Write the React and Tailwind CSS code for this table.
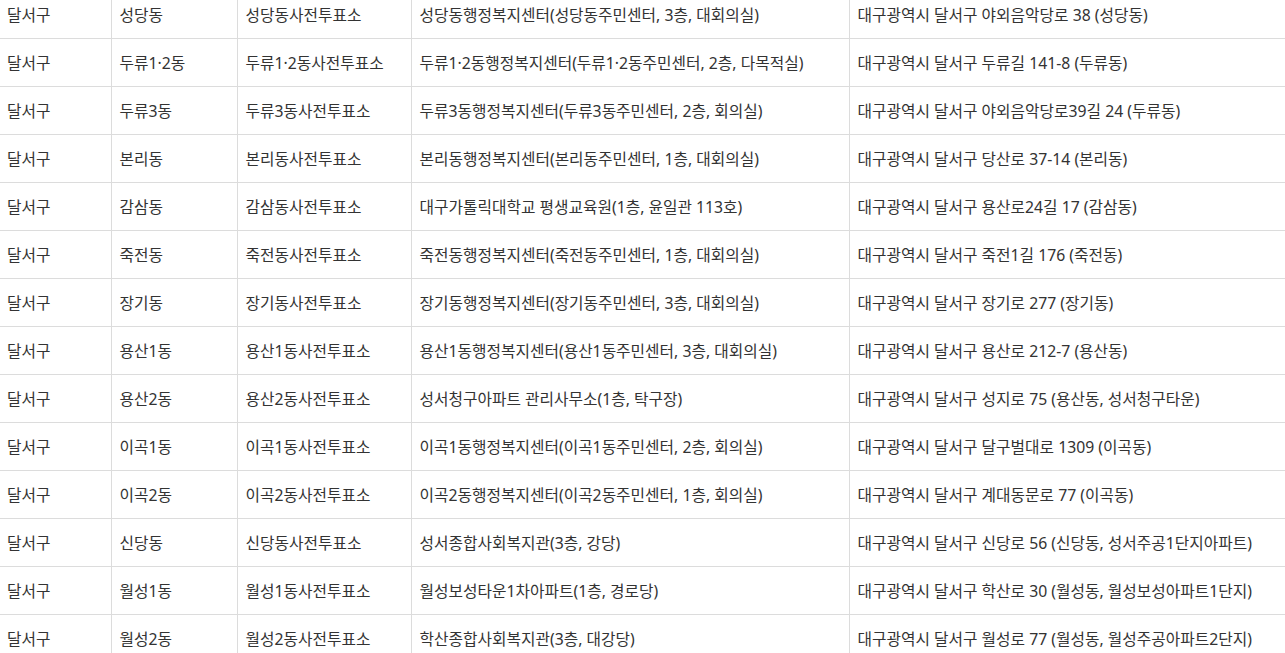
import React from "react";

const rows = [
    ["달서구", "성당동", "성당동사전투표소", "성당동행정복지센터(성당동주민센터, 3층, 대회의실)", "대구광역시 달서구 야외음악당로 38 (성당동)"],
    ["달서구", "두류1·2동", "두류1·2동사전투표소", "두류1·2동행정복지센터(두류1·2동주민센터, 2층, 다목적실)", "대구광역시 달서구 두류길 141-8 (두류동)"],
    ["달서구", "두류3동", "두류3동사전투표소", "두류3동행정복지센터(두류3동주민센터, 2층, 회의실)", "대구광역시 달서구 야외음악당로39길 24 (두류동)"],
    ["달서구", "본리동", "본리동사전투표소", "본리동행정복지센터(본리동주민센터, 1층, 대회의실)", "대구광역시 달서구 당산로 37-14 (본리동)"],
    ["달서구", "감삼동", "감삼동사전투표소", "대구가톨릭대학교 평생교육원(1층, 윤일관 113호)", "대구광역시 달서구 용산로24길 17 (감삼동)"],
    ["달서구", "죽전동", "죽전동사전투표소", "죽전동행정복지센터(죽전동주민센터, 1층, 대회의실)", "대구광역시 달서구 죽전1길 176 (죽전동)"],
    ["달서구", "장기동", "장기동사전투표소", "장기동행정복지센터(장기동주민센터, 3층, 대회의실)", "대구광역시 달서구 장기로 277 (장기동)"],
    ["달서구", "용산1동", "용산1동사전투표소", "용산1동행정복지센터(용산1동주민센터, 3층, 대회의실)", "대구광역시 달서구 용산로 212-7 (용산동)"],
    ["달서구", "용산2동", "용산2동사전투표소", "성서청구아파트 관리사무소(1층, 탁구장)", "대구광역시 달서구 성지로 75 (용산동, 성서청구타운)"],
    ["달서구", "이곡1동", "이곡1동사전투표소", "이곡1동행정복지센터(이곡1동주민센터, 2층, 회의실)", "대구광역시 달서구 달구벌대로 1309 (이곡동)"],
    ["달서구", "이곡2동", "이곡2동사전투표소", "이곡2동행정복지센터(이곡2동주민센터, 1층, 회의실)", "대구광역시 달서구 계대동문로 77 (이곡동)"],
    ["달서구", "신당동", "신당동사전투표소", "성서종합사회복지관(3층, 강당)", "대구광역시 달서구 신당로 56 (신당동, 성서주공1단지아파트)"],
    ["달서구", "월성1동", "월성1동사전투표소", "월성보성타운1차아파트(1층, 경로당)", "대구광역시 달서구 학산로 30 (월성동, 월성보성아파트1단지)"],
    ["달서구", "월성2동", "월성2동사전투표소", "학산종합사회복지관(3층, 대강당)", "대구광역시 달서구 월성로 77 (월성동, 월성주공아파트2단지)"],
];

const widths = ["w-[111px]", "w-[126px]", "w-[174px]", "w-[438px]", "w-[460px]"];

export default function App() {
    return (
        <div className="w-[1285px] h-[653px] overflow-hidden bg-white font-['Noto_Sans','Noto_Sans_CJK_KR',sans-serif] text-[15.75px] text-[#333]">
            <table className="-mt-[10px] border-collapse table-fixed w-[1309px]">
                <colgroup>
                    {widths.map((w, i) => (
                        <col key={i} className={w} />
                    ))}
                </colgroup>
                <tbody>
                    {rows.map((row, r) => (
                        <tr key={r} className="h-[48px]">
                            {row.map((cell, c) => (
                                <td
                                    key={c}
                                    className={`border border-[#dcdcdc] whitespace-nowrap leading-[20px] ${c === 0 ? "border-l-0 pl-[7px]" : "pl-[8px]"}`}
                                >
                                    {cell}
                                </td>
                            ))}
                        </tr>
                    ))}
                </tbody>
            </table>
        </div>
    );
}
